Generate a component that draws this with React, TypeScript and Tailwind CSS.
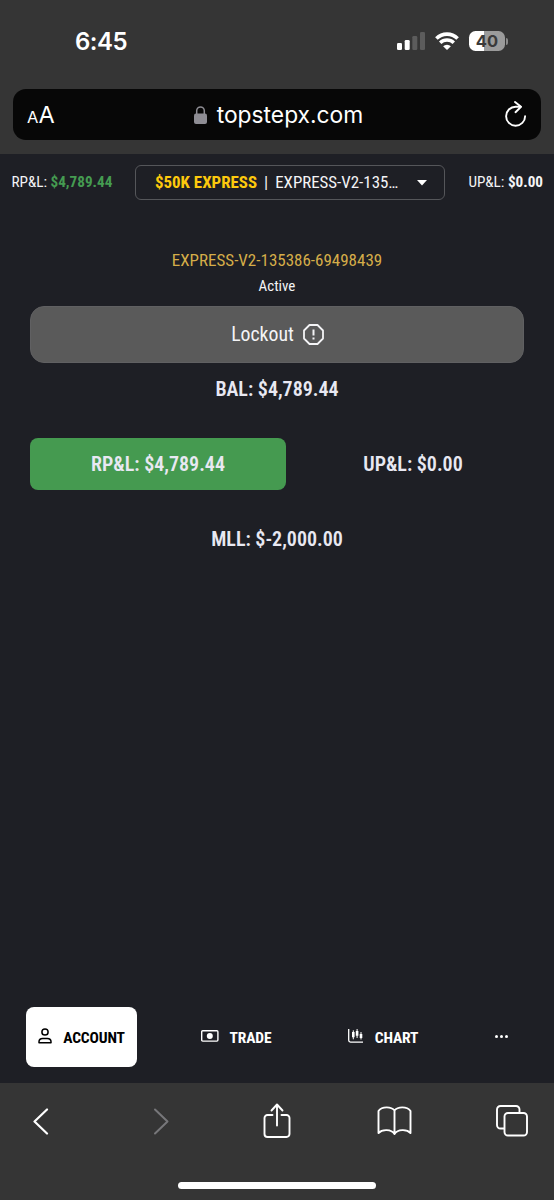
import type { ReactNode } from 'react'

const TABS = [
  { id: 'account', label: 'ACCOUNT', icon: <PersonIcon /> },
  { id: 'trade', label: 'TRADE', icon: <CashIcon /> },
  { id: 'chart', label: 'CHART', icon: <CandlesIcon /> },
]

function PersonIcon() {
  return (
    <svg width="14" height="16" viewBox="0 0 14 16" fill="none" stroke="currentColor" strokeWidth="1.5">
      <circle cx="7" cy="4" r="3.1" />
      <path d="M1 14.8v-1c0-2 1.7-3.3 3.7-3.3h4.6c2 0 3.7 1.3 3.7 3.3v1z" strokeLinejoin="round" />
    </svg>
  )
}

function CashIcon() {
  return (
    <svg width="18" height="12" viewBox="0 0 18 12" fill="none">
      <rect x="0.7" y="0.7" width="16.2" height="10.4" rx="1" stroke="currentColor" strokeWidth="1.4" />
      <circle cx="8.8" cy="5.9" r="3" fill="currentColor" />
    </svg>
  )
}

function CandlesIcon() {
  return (
    <svg width="16" height="14" viewBox="0 0 16 14" fill="none" stroke="currentColor">
      <path d="M0.7 0v11.3c0 1.2.6 1.8 1.8 1.8H15" strokeWidth="1.3" />
      <path d="M5.3 1.3v9M9.1 0v9M13 3v7.5" strokeWidth="1" />
      <path d="M5.3 3v5.2M9.1 2v4.7M13 5v4" strokeWidth="2.6" />
    </svg>
  )
}

function StatusBar() {
  return (
    <div className="flex h-[89px] items-start justify-between pl-[75px] pr-[46px] pt-[25px]">
      <span className="pt-px text-[24px] font-semibold leading-8 tracking-[-0.5px] text-white">6:45</span>
      <div className="flex h-8 items-center">
        <svg width="28" height="18" viewBox="0 0 28 18" className="mr-[10px]">
          <rect x="0" y="11" width="5" height="7" rx="1.3" fill="#fff" />
          <rect x="7.7" y="8" width="5" height="10" rx="1.3" fill="#fff" />
          <rect x="15.3" y="4" width="5" height="14" rx="1.3" fill="#5c5c5c" />
          <rect x="23" y="0" width="5" height="18" rx="1.3" fill="#5c5c5c" />
        </svg>
        <svg width="24" height="18" viewBox="0 0 24 18" className="mr-[10px]" fill="none" stroke="#fff">
          <path d="M1.4 6.5a15 15 0 0 1 21.2 0" strokeWidth="3.6" />
          <path d="M5.2 10.8a9.6 9.6 0 0 1 13.6 0" strokeWidth="3.4" />
          <path d="M12 18l-3.9-3.7a5.5 5.5 0 0 1 7.8 0z" fill="#fff" stroke="none" />
        </svg>
        <div className="flex items-center gap-px">
          <div className="flex h-5 w-9 items-center justify-center rounded-[6.5px] bg-linear-to-r from-white from-[41%] to-[#9b9b9b] to-[41%] text-[16.5px] font-bold leading-none text-[#3a3a3a]">
            40
          </div>
          <div className="h-[7px] w-[2px] rounded-r-full bg-[#8b8b8b]" />
        </div>
      </div>
    </div>
  )
}

function AddressBar() {
  return (
    <div className="mx-[13px] flex h-[51px] items-center justify-between rounded-[13px] bg-[#070707] px-[14px] text-white">
      <span className="flex w-[60px] items-baseline text-[23.5px] leading-none">
        <span className="text-[16.5px]">A</span>A
      </span>
      <div className="flex items-center gap-[10px] pl-[3px]">
        <svg width="13" height="18" viewBox="0 0 13 18">
          <rect x="0" y="7.5" width="13" height="10.5" rx="2" fill="#8e8d94" />
          <path d="M2.7 8.5V4.7a3.8 3.8 0 0 1 7.6 0v3.8" fill="none" stroke="#8e8d94" strokeWidth="1.5" />
        </svg>
        <span className="text-[22.8px] leading-7">topstepx.com</span>
      </div>
      <div className="flex w-[60px] justify-end">
        <svg width="22" height="28" viewBox="0 0 22 28" fill="none" stroke="#fff" strokeWidth="1.9" strokeLinecap="round" strokeLinejoin="round">
          <path d="M15.5 5.7H10.6A9.5 9.5 0 1 0 20.1 15.2" />
          <path d="M10 1l6 4.8-5.5 5.4" />
        </svg>
      </div>
    </div>
  )
}

function TopBar() {
  return (
    <div className="flex h-[57px] items-center justify-between pl-[11.5px] pr-[11px] text-[15.2px]">
      <div className="w-[123.5px]">
        RP&amp;L: <span className="font-bold text-[#459b51]">$4,789.44</span>
      </div>
      <div className="flex h-[35px] w-[310px] items-center rounded-[6px] border-[1.5px] border-[#55565a] pl-[19px] text-[16.9px]">
        <span className="pt-px font-bold text-[#fdc90d]">$50K EXPRESS</span>
        <span className="mx-[7px]">|</span>
        <span className="pt-px">EXPRESS-V2-135…</span>
        <svg width="10" height="6" viewBox="0 0 10 6" className="ml-auto mr-[17px]">
          <path d="M0 0h10L5 5.5z" fill="#fff" />
        </svg>
      </div>
      <div className="w-[98px] text-right">
        UP&amp;L: <span className="font-bold">$0.00</span>
      </div>
    </div>
  )
}

function Stat({ children, className = '' }: { children: ReactNode; className?: string }) {
  return (
    <div className={`flex h-[52px] items-center justify-center rounded-lg text-[20px] font-semibold text-[#e8e8f2] ${className}`}>
      {children}
    </div>
  )
}

function AccountPanel() {
  return (
    <div className="flex flex-1 flex-col px-[30px] pt-[37px]">
      <div className="text-center text-[17px] leading-6 text-[#d5ad49]">EXPRESS-V2-135386-69498439</div>
      <div className="mt-[2px] text-center text-[15px] leading-6">Active</div>
      <button className="mt-[8px] flex h-[57px] items-center justify-center gap-[9px] rounded-[14px] border border-[#606062] bg-[#5a5a5a] pl-px text-[19.8px]">
        Lockout
        <svg width="21" height="21" viewBox="0 0 21 21" fill="none" stroke="currentColor" strokeWidth="1.8">
          <path d="M6.5 1h8L20 6.5v8L14.5 20h-8L1 14.5v-8z" strokeLinejoin="round" />
          <path d="M10.5 5.5v6M10.5 13.5v2" strokeWidth="2" />
        </svg>
      </button>
      <Stat>BAL: $4,789.44</Stat>
      <div className="mt-[23px] grid grid-cols-[256px_1fr]">
        <Stat className="bg-[#459a50]">RP&amp;L: $4,789.44</Stat>
        <Stat className="pl-[16px]">UP&amp;L: $0.00</Stat>
      </div>
      <Stat className="mt-[23px]">MLL: $-2,000.00</Stat>
    </div>
  )
}

function TabBar() {
  return (
    <div className="grid h-[76px] grid-cols-[111px_198px_96px_1fr] items-start pl-[26px] text-[15.5px] font-bold tracking-[-0.15px] text-white">
      {TABS.map((tab) => (
        <button
          key={tab.id}
          className={`flex h-[60px] items-center justify-center gap-[11px] rounded-lg pb-[2px] ${
            tab.id === 'account' ? 'bg-white text-black' : ''
          }`}
        >
          {tab.icon}
          <span className="pt-[5px]">{tab.label}</span>
        </button>
      ))}
      <button className="flex h-[58px] items-center justify-center gap-[2px] pl-[18px]">
        <span className="size-[3px] rounded-full bg-white" />
        <span className="size-[3px] rounded-full bg-white" />
        <span className="size-[3px] rounded-full bg-white" />
      </button>
    </div>
  )
}

function ToolbarButton({ children, className = '' }: { children: ReactNode; className?: string }) {
  return <button className={`flex h-9 w-9 items-center justify-center ${className}`}>{children}</button>
}

function BrowserToolbar() {
  return (
    <div className="flex h-[117px] flex-col justify-between bg-[#353535] pb-[11px] pt-[20px] text-white">
      <div className="flex items-center justify-between pl-[23px] pr-[24px]">
        <ToolbarButton>
          <svg width="16" height="27" viewBox="0 0 16 27" fill="none" stroke="currentColor" strokeWidth="2.2" strokeLinecap="round" strokeLinejoin="round">
            <path d="M14 1.5L1.5 13.5 14 25.5" />
          </svg>
        </ToolbarButton>
        <ToolbarButton className="pl-1">
          <svg width="16" height="27" viewBox="0 0 16 27" fill="none" stroke="#77777a" strokeWidth="2" strokeLinecap="round" strokeLinejoin="round">
            <path d="M2 1.5l12.5 12L2 25.5" />
          </svg>
        </ToolbarButton>
        <ToolbarButton>
          <svg width="28" height="36" viewBox="0 0 28 36" fill="none" stroke="currentColor" strokeWidth="1.9" strokeLinecap="round" strokeLinejoin="round">
            <path d="M9.5 12H4.5A3 3 0 0 0 1.5 15v16a3 3 0 0 0 3 3h19a3 3 0 0 0 3-3V15a3 3 0 0 0-3-3H18.5" />
            <path d="M14 22.5V2M8.5 7.5L14 1.5l5.5 6" />
          </svg>
        </ToolbarButton>
        <ToolbarButton>
          <svg width="35" height="30" viewBox="0 0 35 30" fill="none" stroke="currentColor" strokeWidth="1.9" strokeLinejoin="round">
            <path d="M17.5 4.5C14.5.5 5 0 1.5 5v22c3.5-4 13-4 16 1 3-5 12.5-5 16-1V5C30 0 20.5.5 17.5 4.5zM17.5 4.5V28" />
          </svg>
        </ToolbarButton>
        <ToolbarButton>
          <svg width="32" height="32" viewBox="0 0 32 32" fill="none" stroke="currentColor" strokeWidth="1.9">
            <rect x="8.5" y="8" width="22.5" height="22.5" rx="3.5" />
            <path d="M8 23.5H4.5A3.5 3.5 0 0 1 1 20V4.5A3.5 3.5 0 0 1 4.5 1H20a3.5 3.5 0 0 1 3.5 3.5V7.5" />
          </svg>
        </ToolbarButton>
      </div>
      <div className="mx-auto h-[7px] w-[198px] rounded-full bg-white" />
    </div>
  )
}

export default function App() {
  return (
    <div className="flex h-[1200px] w-[554px] flex-col overflow-hidden bg-[#353535] font-['Inter',sans-serif]">
      <div className="h-[154px]">
        <StatusBar />
        <AddressBar />
      </div>
      <div className="flex flex-1 flex-col bg-[#1e1f25] font-['Roboto_Condensed','Roboto',sans-serif] text-[#f4f4f6] font-stretch-condensed">
        <TopBar />
        <AccountPanel />
        <TabBar />
      </div>
      <BrowserToolbar />
    </div>
  )
}
